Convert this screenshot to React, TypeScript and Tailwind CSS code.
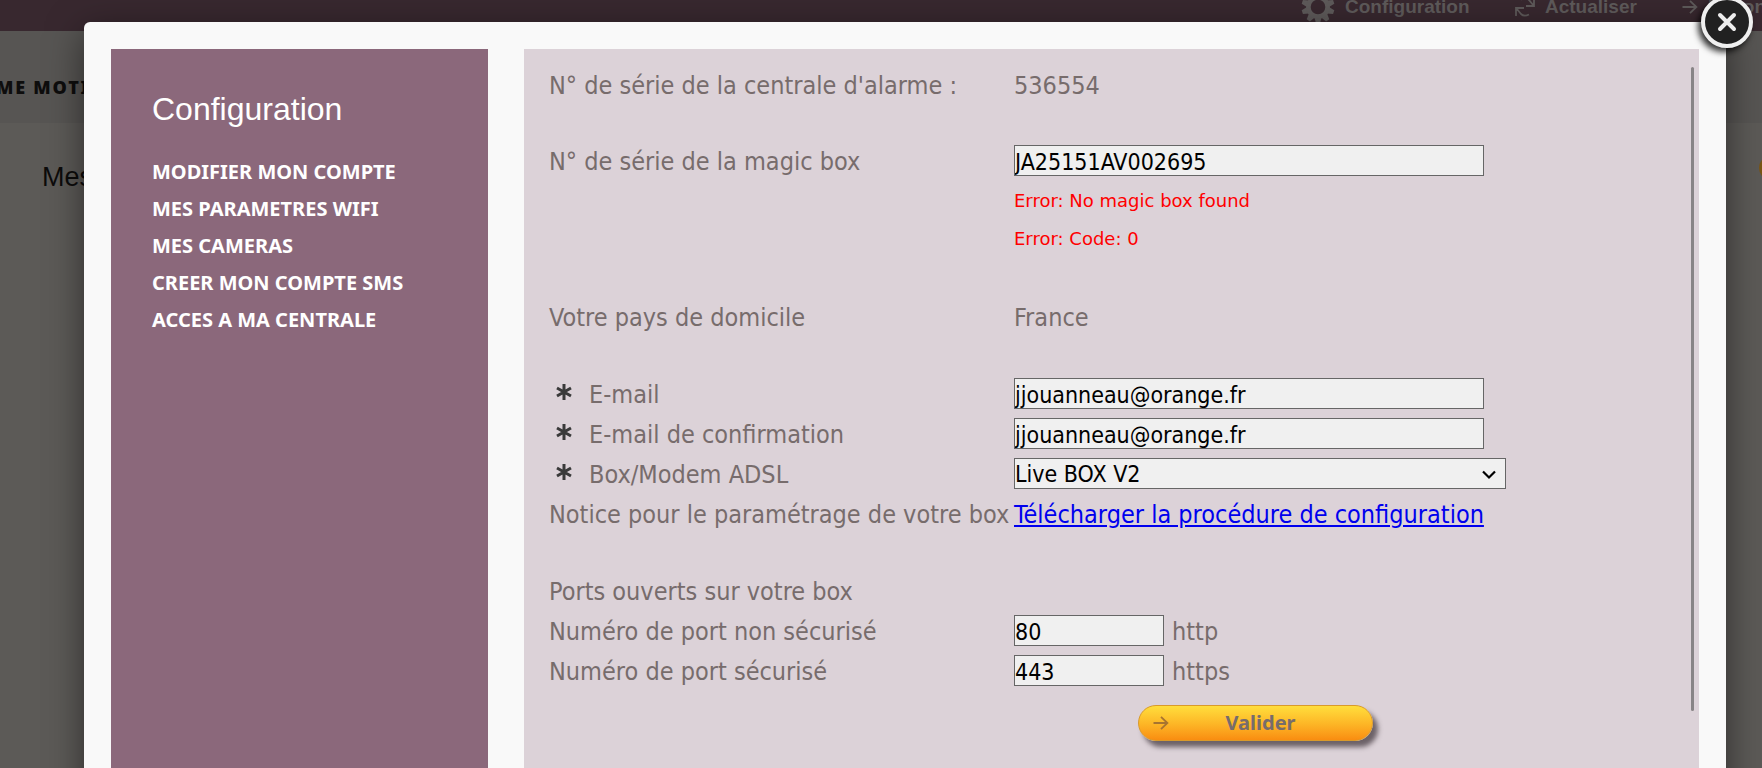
import { useState } from "react";
import type { ReactNode } from "react";

const MENU = [
  "MODIFIER MON COMPTE",
  "MES PARAMETRES WIFI",
  "MES CAMERAS",
  "CREER MON COMPTE SMS",
  "ACCES A MA CENTRALE",
];

const FIELD =
  "mb-[3px] h-[31px] border border-[#666] bg-[#f0f0f0] px-0 pt-0.5 pb-0 font-['DejaVu_Sans_Condensed','DejaVu_Sans',sans-serif] text-[23px] leading-[27px] text-black outline-none";

function GearIcon() {
  return (
    <svg width="34" height="34" viewBox="-17 -17 34 34" className="shrink-0" fill="#5e5a5a" aria-hidden="true">
      {[0, 36, 72, 108, 144, 180, 216, 252, 288, 324].map((a) => (
        <path key={a} d="M-3.6 -10 L-2 -16.5 H2 L3.6 -10 Z" transform={`rotate(${a})`} />
      ))}
      <circle r="9.6" fill="none" stroke="#5e5a5a" strokeWidth="4.6" />
    </svg>
  );
}

function RefreshIcon() {
  return (
    <svg width="20" height="20" viewBox="0 0 20 20" className="shrink-0" fill="none" stroke="#5e5a5a" strokeWidth="1.8" aria-hidden="true">
      <path d="M1 19V11H9M1.500 11.500L6 17Q9 20 14 17.500M19 1V9H11M18.500 8.500L14 3Q11 0 6 2.500" />
    </svg>
  );
}

function ArrowIcon({ color }: { color: string }) {
  return (
    <svg width="16" height="14" viewBox="0 0 16 14" className="shrink-0" fill="none" stroke={color} strokeWidth="1.8" aria-hidden="true">
      <path d="M0.500 7H14M8 0.800L14.400 7L8 13.200" />
    </svg>
  );
}

function Asterisk() {
  return (
    <svg width="16" height="18" viewBox="-8 -9 16 18" className="mb-1.5 shrink-0" stroke="#3a3a3a" strokeWidth="3" aria-hidden="true">
      <path d="M0 -8V8M-7 -4L7 4M-7 4L7 -4" />
    </svg>
  );
}

function Row({ label, htmlFor, required, children }: { label: string; htmlFor?: string; required?: boolean; children?: ReactNode }) {
  const text = (
    <>
      {required && (
        <span className="flex w-10 shrink-0 items-center pl-[7px]">
          <Asterisk />
        </span>
      )}
      {label}
    </>
  );
  return (
    <div className="flex h-10 items-center pt-0.5">
      {htmlFor ? (
        <label htmlFor={htmlFor} className="flex w-[465px] shrink-0 items-center whitespace-nowrap">
          {text}
        </label>
      ) : (
        <span className="flex w-[465px] shrink-0 items-center whitespace-nowrap">{text}</span>
      )}
      {children}
    </div>
  );
}

function Backdrop() {
  return (
    <div className="h-full bg-[#5c5a57] font-['Liberation_Sans',sans-serif]">
      <header className="flex h-[31px] items-start justify-end overflow-hidden bg-[#38282f] text-[19px] leading-[14px] font-bold text-[#5e5a5a]">
        <div className="-mt-3 flex h-[38px] items-center whitespace-nowrap">
          <GearIcon />
          <span className="ml-2.5 w-[170px]">Configuration</span>
          <RefreshIcon />
          <span className="ml-2.5 w-[137px]">Actualiser</span>
          <ArrowIcon color="#5e5a5a" />
          <span className="ml-2.5 w-[54px] overflow-hidden">Déconnexion</span>
        </div>
      </header>
      <div className="flex h-[92px] items-center bg-[#575553] text-[18px] text-[#0e0d0d]">
        <span className="-ml-1 pt-5 font-['Noto_Sans',sans-serif] font-black tracking-widest">ME MOTI</span>
      </div>
      <main className="flex items-start justify-between pt-9 pl-[42px]">
        <h2 className="text-[27px] leading-9 font-medium text-[#0c0b0b]">Mes</h2>
        <span className="-mt-1 -mr-[33px] h-[26px] w-9 rounded-full bg-[#7a5514]" />
      </main>
    </div>
  );
}

export default function App() {
  const [serial, setSerial] = useState("JA25151AV002695");
  const [email, setEmail] = useState("jjouanneau@orange.fr");
  const [confirm, setConfirm] = useState("jjouanneau@orange.fr");
  const [http, setHttp] = useState("80");
  const [https, setHttps] = useState("443");
  return (
    <div className="relative h-screen overflow-hidden">
      <Backdrop />
      <div className="absolute inset-0 pt-[22px] pr-9 pl-[84px]">
        <div
          role="dialog"
          aria-label="Configuration"
          className="relative flex min-h-full gap-9 rounded-md bg-[#f9f9f9] p-[27px] shadow-[0_10px_36px_rgba(0,0,0,0.5)]"
        >
          <nav className="w-[377px] shrink-0 bg-[#8b687b] pt-10 pl-[41px] text-white">
            <h1 className="font-['Liberation_Sans',sans-serif] text-[32px] leading-10">Configuration</h1>
            <ul className="mt-6 font-['Noto_Sans',sans-serif] text-[20px] leading-[37px] font-bold">
              {MENU.map((m) => (
                <li key={m}>
                  <a href="#">{m}</a>
                </li>
              ))}
            </ul>
          </nav>

          <section className="flex flex-1 items-start bg-[#dcd2d8] pt-4 pr-[5px] pl-[25px] font-['DejaVu_Sans_Condensed','DejaVu_Sans',sans-serif] text-[25px] text-[#776c6c]">
            <form className="flex-1 pb-20" onSubmit={(e) => e.preventDefault()}>
              <Row label="N° de série de la centrale d'alarme :">536554</Row>
              <div className="mt-9">
                <Row label="N° de série de la magic box" htmlFor="serial">
                  <input id="serial" className={`${FIELD} w-[470px]`} value={serial} onChange={(e) => setSerial(e.target.value)} />
                </Row>
                <div className="ml-[465px] pt-px font-['DejaVu_Sans',sans-serif] text-[18px] leading-[38px] text-[#ff0000]">
                  <p>Error: No magic box found</p>
                  <p>Error: Code: 0</p>
                </div>
              </div>
              <div className="mt-[39px]">
                <Row label="Votre pays de domicile">France</Row>
              </div>
              <div className="mt-[37px]">
                <Row label="E-mail" htmlFor="email" required>
                  <input id="email" className={`${FIELD} w-[470px]`} value={email} onChange={(e) => setEmail(e.target.value)} />
                </Row>
                <Row label="E-mail de confirmation" htmlFor="confirm" required>
                  <input id="confirm" className={`${FIELD} w-[470px]`} value={confirm} onChange={(e) => setConfirm(e.target.value)} />
                </Row>
                <Row label="Box/Modem ADSL" htmlFor="modem" required>
                  <div className="relative flex">
                    <select id="modem" className={`${FIELD} w-[492px] appearance-none`}>
                      <option>Live BOX V2</option>
                    </select>
                    <svg width="14" height="10" viewBox="0 0 14 10" className="pointer-events-none absolute top-3 right-2.5" fill="none" stroke="#000" strokeWidth="2.2" aria-hidden="true">
                      <path d="M1 1.500L7 7.500L13 1.500" />
                    </svg>
                  </div>
                </Row>
                <Row label="Notice pour le paramétrage de votre box">
                  <a href="#" className="whitespace-nowrap text-[#0000ee] underline">
                    Télécharger la procédure de configuration
                  </a>
                </Row>
              </div>
              <div className="mt-[37px]">
                <Row label="Ports ouverts sur votre box" />
                <Row label="Numéro de port non sécurisé" htmlFor="http">
                  <input id="http" className={`${FIELD} mr-2 w-[150px]`} value={http} onChange={(e) => setHttp(e.target.value)} />
                  http
                </Row>
                <Row label="Numéro de port sécurisé" htmlFor="https">
                  <input id="https" className={`${FIELD} mr-2 w-[150px]`} value={https} onChange={(e) => setHttps(e.target.value)} />
                  https
                </Row>
              </div>
              <button
                type="submit"
                className="mt-3.5 ml-[589px] flex h-9 w-[235px] items-center rounded-full border border-[#d99a2b] bg-linear-to-b from-[#ffde3c] via-[#fdb827] to-[#f98d10] pl-3.5 font-['Noto_Sans',sans-serif] text-[20px] font-bold shadow-[5px_6px_5px_rgba(60,50,55,0.7)]"
              >
                <ArrowIcon color="#a87430" />
                <span className="flex-1 pr-5 text-center">Valider</span>
              </button>
            </form>
            <div className="mt-0.5 h-[644px] w-[3px] rounded-full bg-[#888486]" />
          </section>

          <button
            type="button"
            aria-label="Fermer"
            className="absolute -top-[26px] -right-[27px] flex size-[52px] items-center justify-center rounded-full border-4 border-[#efefef] bg-[#212121] shadow-[-3px_4px_6px_rgba(0,0,0,0.8)]"
          >
            <svg width="20" height="20" viewBox="0 0 20 20" stroke="#ededed" strokeWidth="4" strokeLinecap="round" aria-hidden="true">
              <path d="M3 3L17 17M17 3L3 17" />
            </svg>
          </button>
        </div>
      </div>
    </div>
  );
}
